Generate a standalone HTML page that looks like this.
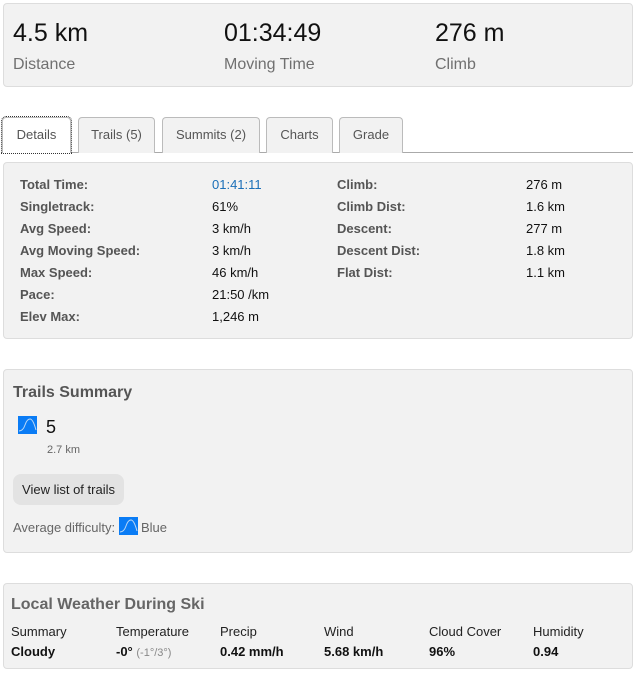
<!DOCTYPE html><html><head><style>
*{margin:0;padding:0;box-sizing:border-box}
body{width:637px;height:675px;background:#fff;font-family:"Liberation Sans",sans-serif;position:relative;overflow:hidden}
.a{position:absolute;white-space:nowrap}
.box{position:absolute;left:3px;width:630px;background:#f2f2f2;border:1px solid #ddd;border-radius:4px}
.big{font-size:25px;color:#111}
.lab{font-size:16px;color:#707070}
.tab{position:absolute;top:117px;height:36px;background:#f2f2f2;border:1px solid #bbb;border-bottom:none;border-radius:4px 4px 0 0;font-size:13px;color:#555;text-align:center;line-height:34px}
.r{font-size:13px;color:#111}
.l{font-size:13px;color:#555;font-weight:bold}
</style></head><body>
<div class="box" style="top:3px;height:84px"></div>
<div class="a big" style="left:13px;top:19px">4.5 km</div>
<div class="a big" style="left:224px;top:19px">01:34:49</div>
<div class="a big" style="left:435px;top:19px">276 m</div>
<div class="a lab" style="left:13px;top:56px">Distance</div>
<div class="a lab" style="left:224px;top:56px">Moving Time</div>
<div class="a lab" style="left:435px;top:56px">Climb</div>

<div class="a" style="left:70px;top:152px;width:563px;border-top:1px solid #aaa"></div>
<div class="tab" style="left:2px;width:69px;background:#fff;outline:1px dotted #333">Details</div>
<div class="tab" style="left:78px;width:77px">Trails (5)</div>
<div class="tab" style="left:162px;width:98px">Summits (2)</div>
<div class="tab" style="left:266px;width:67px">Charts</div>
<div class="tab" style="left:339px;width:64px">Grade</div>

<div class="box" style="top:162px;height:177px"></div>
<div class="a l" style="left:20px;top:174px;line-height:22px">Total Time:<br>Singletrack:<br>Avg Speed:<br>Avg Moving Speed:<br>Max Speed:<br>Pace:<br>Elev Max:</div>
<div class="a r" style="left:212px;top:174px;line-height:22px"><span style="color:#1a6fb8">01:41:11</span><br>61%<br>3 km/h<br>3 km/h<br>46 km/h<br>21:50 /km<br>1,246 m</div>
<div class="a l" style="left:337px;top:174px;line-height:22px">Climb:<br>Climb Dist:<br>Descent:<br>Descent Dist:<br>Flat Dist:</div>
<div class="a r" style="left:526px;top:174px;line-height:22px">276 m<br>1.6 km<br>277 m<br>1.8 km<br>1.1 km</div>

<div class="box" style="top:369px;height:184px"></div>
<div class="a" style="left:13px;top:384px;font-size:16px;font-weight:bold;color:#555">Trails Summary</div>
<svg class="a" style="left:18px;top:416px" width="19" height="18"><rect width="19" height="18" fill="#0a7cf5"/><path d="M1 15 Q5 15 7 9 Q9 3 12 3 Q15 3 18 14" stroke="#bcd8f5" fill="none" stroke-width="1"/></svg>
<div class="a" style="left:46px;top:417px;font-size:18px;color:#111">5</div>
<div class="a" style="left:47px;top:444px;font-size:11px;color:#666">2.7 km</div>
<div class="a" style="left:13px;top:474px;width:111px;height:31px;background:#e3e3e3;border-radius:8px;font-size:13px;color:#222;text-align:center;line-height:31px">View list of trails</div>
<div class="a" style="left:13px;top:520px;font-size:13px;color:#666">Average difficulty:</div>
<svg class="a" style="left:119px;top:517px" width="19" height="18"><rect width="19" height="18" fill="#0a7cf5"/><path d="M1 15 Q5 15 7 9 Q9 3 12 3 Q15 3 18 14" stroke="#bcd8f5" fill="none" stroke-width="1"/></svg>
<div class="a" style="left:141px;top:520px;font-size:13px;color:#666">Blue</div>

<div class="box" style="top:583px;height:86px"></div>
<div class="a" style="left:11px;top:596px;font-size:16px;font-weight:bold;color:#666">Local Weather During Ski</div>
<div class="a r" style="left:11px;top:624px;color:#222">Summary</div>
<div class="a r" style="left:116px;top:624px;color:#222">Temperature</div>
<div class="a r" style="left:220px;top:624px;color:#222">Precip</div>
<div class="a r" style="left:324px;top:624px;color:#222">Wind</div>
<div class="a r" style="left:429px;top:624px;color:#222">Cloud Cover</div>
<div class="a r" style="left:533px;top:624px;color:#222">Humidity</div>
<div class="a r" style="left:11px;top:644px;font-weight:bold">Cloudy</div>
<div class="a r" style="left:116px;top:644px;font-weight:bold">-0° <span style="font-weight:normal;font-size:11px;color:#888">(-1°/3°)</span></div>
<div class="a r" style="left:220px;top:644px;font-weight:bold">0.42 mm/h</div>
<div class="a r" style="left:324px;top:644px;font-weight:bold">5.68 km/h</div>
<div class="a r" style="left:429px;top:644px;font-weight:bold">96%</div>
<div class="a r" style="left:533px;top:644px;font-weight:bold">0.94</div>
</body></html>
